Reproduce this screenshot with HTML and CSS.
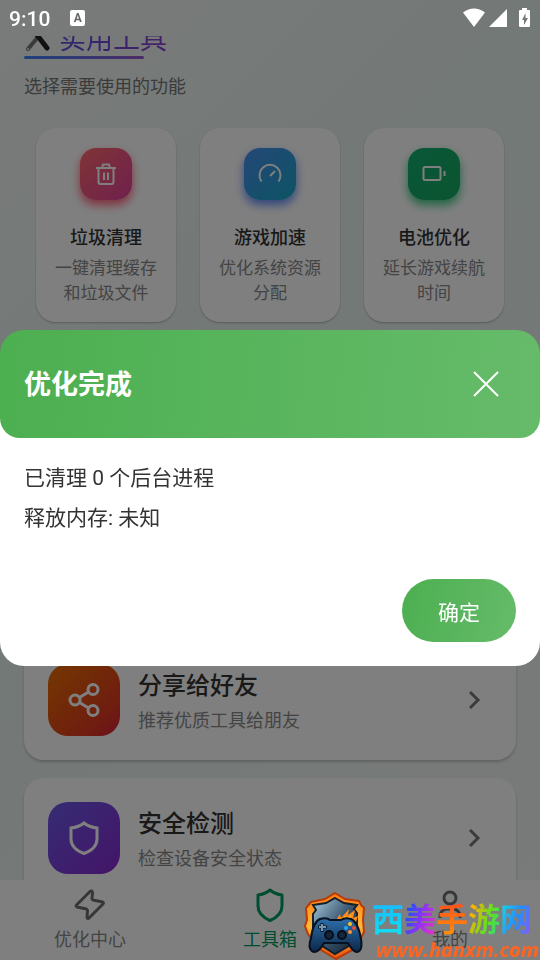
FILE: index.html
```html
<!DOCTYPE html>
<html lang="zh-CN">
<head>
    <meta charset="UTF-8">
    <meta name="viewport" content="width=device-width, initial-scale=1.0">
    <title>工具箱</title>
    <link rel="stylesheet" href="styles.css">
</head>
<body>

    <div class="app">
        <main class="content">
            <header class="page-header">
                <h1>
                    <svg class="title-icon" viewBox="0 0 27 27">
                        <path d="M4 23 L14 11" stroke="#777" stroke-width="4" stroke-linecap="round"/>
                        <path d="M13 9 L23 22" stroke="#222" stroke-width="5" stroke-linecap="round"/>
                        <circle cx="4" cy="23" r="1" fill="#eee" stroke="none"/>
                    </svg>
                    <span class="title-text">实用工具</span>
                </h1>
                <p>选择需要使用的功能</p>
            </header>

            <section class="tool-grid">
                <a href="#" class="tool-card">
                    <span class="tool-icon red">
                        <svg viewBox="0 0 24 24"><path d="M2 6h20M8 6l1-3.500h6L16 6M4.500 6v14a2 2 0 0 0 2 2h11a2 2 0 0 0 2-2V6M10 10.500v7.500M14 10.500v7.500"/></svg>
                    </span>
                    <strong>垃圾清理</strong>
                    <span class="desc">一键清理缓存和垃圾文件</span>
                </a>
                <a href="#" class="tool-card">
                    <span class="tool-icon blue">
                        <svg viewBox="0 0 24 24"><path d="M3.500 19.500a10.500 10.500 0 1 1 17 0M12 14l5-5"/></svg>
                    </span>
                    <strong>游戏加速</strong>
                    <span class="desc">优化系统资源分配</span>
                </a>
                <a href="#" class="tool-card">
                    <span class="tool-icon green">
                        <svg viewBox="0 0 24 24"><rect x="1.500" y="5" width="17" height="13" rx="1.500"/><path d="M22.500 9v5"/></svg>
                    </span>
                    <strong>电池优化</strong>
                    <span class="desc">延长游戏续航时间</span>
                </a>
            </section>

            <section class="feature-list">
                <a href="#" class="feature-card">
                    <span class="feature-icon orange">
                        <svg viewBox="0 0 36 36"><circle cx="9" cy="18" r="5"/><circle cx="27" cy="7.500" r="5"/><circle cx="27" cy="28.500" r="5"/><path d="M13.500 15.500l9-5.500M13.500 20.500l9 5.500"/></svg>
                    </span>
                    <span class="feature-text">
                        <strong>分享给好友</strong>
                        <span>推荐优质工具给朋友</span>
                    </span>
                    <svg class="chevron" viewBox="0 0 36 36"><path d="M14 10l8 8-8 8"/></svg>
                </a>
                <a href="#" class="feature-card">
                    <span class="feature-icon purple">
                        <svg viewBox="0 0 36 36"><path d="M18 3c3.500 3 8 4.500 13 5v11c0 7-5 11.500-13 14.500C10 30.500 5 26 5 19V8c5-.5 9.500-2 13-5z"/></svg>
                    </span>
                    <span class="feature-text">
                        <strong>安全检测</strong>
                        <span>检查设备安全状态</span>
                    </span>
                    <svg class="chevron" viewBox="0 0 36 36"><path d="M14 10l8 8-8 8"/></svg>
                </a>
            </section>
        </main>

        <nav class="tab-bar">
            <a href="#">
                <svg viewBox="0 0 36 36"><path d="M18 4.500L4.500 18q-1 1.500.500 2l9.500 2q1 .5 1 1.500l-.5 7q.5 2 2 .5L31 17q1-1.500-.5-2l-9.500-2q-1-.5-1-1.500l.5-6q-.5-2.500-2.500-1z"/></svg>
                <span>优化中心</span>
            </a>
            <a href="#" class="active">
                <svg viewBox="0 0 36 36"><path d="M18 3c3.500 3 8 4.500 12 5v11c0 7-5 11.500-12 14.500C11 30.500 6 26 6 19V8c4-.5 8.500-2 12-5z"/></svg>
                <span>工具箱</span>
            </a>
            <a href="#">
                <svg viewBox="0 0 36 36"><circle cx="18" cy="11" r="6"/><path d="M8 31v-2a7 7 0 0 1 7-7h6a7 7 0 0 1 7 7v2"/></svg>
                <span>我的</span>
            </a>
        </nav>
    </div>

    <div class="overlay">
        <div class="modal" role="dialog" aria-labelledby="modal-title">
            <div class="modal-header">
                <h2 id="modal-title">优化完成</h2>
                <button class="close-btn" aria-label="关闭">
                    <svg viewBox="0 0 36 36"><path d="M6 6l24 24M30 6L6 30"/></svg>
                </button>
            </div>
            <div class="modal-body">
                <p>已清理 0 个后台进程</p>
                <p>释放内存: 未知</p>
            </div>
            <div class="modal-footer">
                <button class="ok-btn">确定</button>
            </div>
        </div>
    </div>

    <div class="status-bar">
        <span class="time">9:10</span>
        <span class="badge">A</span>
        <svg class="status-icons" viewBox="0 0 68 20">
            <path d="M0 4.500Q11-3.500 22 4.500L11 19z"/>
            <path d="M44 1v18H26z"/>
            <path fill-rule="evenodd" d="M59 0h5v2h2q1 0 1 1v15q0 1-1 1h-9q-1 0-1-1V3q0-1 1-1h2zM62.500 5l-3.500 7h2v5l4-7h-2.500z"/>
        </svg>
    </div>

    <div class="watermark">
        <svg class="shield" viewBox="0 0 62 68">
            <defs>
                <linearGradient id="fire" x1="0" y1="0" x2="0" y2="1">
                    <stop offset="0" stop-color="#ff7a0c"/>
                    <stop offset=".5" stop-color="#ffb83c"/>
                    <stop offset="1" stop-color="#e8540c"/>
                </linearGradient>
                <linearGradient id="steel" x1="0" y1="0" x2="1" y2="1">
                    <stop offset="0" stop-color="#a9cbe0"/>
                    <stop offset=".5" stop-color="#3b5870"/>
                    <stop offset="1" stop-color="#0c1a2b"/>
                </linearGradient>
                <linearGradient id="pad" x1="0" y1="0" x2="0" y2="1">
                    <stop offset="0" stop-color="#2d70ac"/>
                    <stop offset="1" stop-color="#0c2748"/>
                </linearGradient>
            </defs>
            <path d="M31 1l10 6 14 2 2 4 3 3-1 12 1 12-8 16-20 11-18-11L4 42 1 34l2-6-1-12 5-6 14-3z" fill="url(#fire)" stroke="#b83b0a"/>
            <path d="M31 6l9 5 13 2-3 4 3 4v20l-5 11-17 10-16-10-6-12V22l3-4-3-5 13-2z" fill="url(#steel)" stroke="#17202c" stroke-width="2"/>
            <path d="M31 30l5-8 1 4 8-9-1 6 7-5-2 8 5-2-4 12-20 2z" fill="#ff8a14"/>
            <path d="M37 30l4-6 1 4 5-5-2 8-8 3z" fill="#ffd45a"/>
            <path d="M16 27q7-2 10 1h11q4-3 10-1 7 3 10 20 2 12-4 13-4 0-9-9H20q-5 9-10 9-7-2-3-14 2-16 9-19z" fill="url(#pad)" stroke="#07111f" stroke-width="2"/>
            <path d="M18 31v9M14 35h9" stroke="#0a1728" stroke-width="3"/>
            <path d="M18 32v7M15 35h7" stroke="#7895ad"/>
            <circle cx="25" cy="43" r="4" fill="#16263a" stroke="#070e18"/>
            <circle cx="38" cy="43" r="4" fill="#16263a" stroke="#070e18"/>
            <circle cx="46" cy="32" r="2" fill="#ffc21d"/>
            <circle cx="42" cy="36" r="2" fill="#26a6f0"/>
            <circle cx="50" cy="36" r="2" fill="#f04a30"/>
            <circle cx="46" cy="40" r="2" fill="#ff922a"/>
        </svg>
        <div class="watermark-text">
            <div class="site-name"><span class="c1">西</span><span class="c2">美</span><span class="c3">手</span><span class="c4">游</span><span class="c5">网</span></div>
            <div class="site-url">www.hanxm.com</div>
        </div>
    </div>

</body>
</html>
```

FILE: styles.css
```css
* {
    box-sizing: border-box;
}
body {
    font-family: Roboto, "Noto Sans CJK SC", sans-serif;
    margin: 0;
    height: 100vh;
    overflow: hidden;
    color: #333;
}
h1, h2, p {
    margin: 0;
}
a {
    color: inherit;
    text-decoration: none;
}
button {
    border: none;
    font-family: inherit;
    cursor: pointer;
}
svg {
    flex: none;
    fill: none;
    stroke: currentColor;
    stroke-width: 2;
}
.app {
    height: 100%;
    padding-top: 36px;
    display: flex;
    flex-direction: column;
    background: linear-gradient(135deg, #f2f6f4, #e6f2ee 40%, #f2f6f4);
}

/* content, scrolled a little under the status bar */
.content {
    flex: 1;
    min-height: 0;
    overflow: hidden;
    padding: 0 24px;
}
.page-header {
    margin-top: -16px;
}
.page-header h1 {
    display: flex;
    align-items: center;
    gap: 8px;
    height: 39px;
    font-size: 27px;
    line-height: 40px;
    position: relative;
}
.page-header h1::after {
    content: "";
    position: absolute;
    left: 0;
    bottom: 0;
    width: 120px;
    height: 3px;
    border-radius: 2px;
    background: linear-gradient(90deg, #3b82f6, #9b59d0);
}
.title-icon {
    width: 27px;
    height: 27px;
}
.title-text {
    font-weight: 400;
    background: linear-gradient(90deg, #5b50e0, #8b3fd0);
    -webkit-background-clip: text;
    background-clip: text;
    color: transparent;
}
.page-header p {
    margin-top: 15px;
    font-size: 18px;
    line-height: 26px;
    color: #777;
}

.tool-grid {
    display: grid;
    grid-template-columns: repeat(3, 1fr);
    gap: 24px;
    margin: 28px 12px 0;
}
.tool-card {
    display: flex;
    flex-direction: column;
    align-items: center;
    padding: 20px 16px 16px;
    background: #fff;
    border-radius: 20px;
    box-shadow: 0 1px 2px rgba(0, 0, 0, 0.25);
    text-align: center;
}
.tool-icon {
    display: flex;
    align-items: center;
    justify-content: center;
    width: 52px;
    height: 52px;
    border-radius: 16px;
    color: #fff;
}
.tool-icon svg {
    width: 24px;
    height: 24px;
}
.red {
    background: linear-gradient(135deg, #ff6b6b, #e0409a);
    box-shadow: 0 5px 10px rgba(255, 60, 90, 0.8);
}
.blue {
    background: linear-gradient(135deg, #4a8ff0, #18a8c8);
    box-shadow: 0 5px 10px rgba(59, 110, 246, 0.8);
}
.green {
    background: linear-gradient(135deg, #10b070, #18a860);
    box-shadow: 0 5px 10px rgba(16, 185, 100, 0.8);
}
.tool-card strong {
    margin-top: 25px;
    font-size: 18px;
    line-height: 26px;
    font-weight: 500;
}
.tool-card .desc {
    margin-top: 5px;
    font-size: 17px;
    line-height: 25px;
    color: #888;
}

.feature-list {
    display: flex;
    flex-direction: column;
    gap: 18px;
    margin-top: 318px;
}
.feature-card {
    display: flex;
    align-items: center;
    gap: 18px;
    padding: 24px;
    background: #fff;
    border-radius: 20px;
    box-shadow: 0 2px 3px rgba(0, 0, 0, 0.2);
}
.feature-icon {
    display: flex;
    align-items: center;
    justify-content: center;
    width: 72px;
    height: 72px;
    border-radius: 20px;
    color: #fff;
}
.feature-icon svg {
    width: 36px;
    height: 36px;
    stroke-width: 3;
}
.orange {
    background: linear-gradient(135deg, #e87000, #e03a20 75%, #d82040);
}
.purple {
    background: linear-gradient(135deg, #6a5ae8, #8a28d0);
}
.feature-text {
    flex: 1;
    display: flex;
    flex-direction: column;
    padding-top: 2px;
    font-size: 18px;
    line-height: 26px;
    color: #888;
}
.feature-text strong {
    font-size: 24px;
    line-height: 36px;
    font-weight: 500;
    color: #333;
    margin-bottom: 4px;
}
.chevron {
    width: 36px;
    height: 36px;
    stroke-width: 3;
    color: #777;
}

.tab-bar {
    display: grid;
    grid-template-columns: repeat(3, 1fr);
    background: #fff;
    padding: 7px 0;
    font-size: 18px;
    line-height: 26px;
    color: #888;
}
.tab-bar a {
    display: flex;
    flex-direction: column;
    align-items: center;
    gap: 4px;
}
.tab-bar svg {
    width: 36px;
    height: 36px;
    stroke-width: 3;
    stroke-linejoin: round;
    color: #6b6e72;
}
.tab-bar .active,
.tab-bar .active svg {
    color: #009a60;
}

/* dialog */
.overlay {
    position: fixed;
    inset: 0;
    padding-top: 36px;
    display: flex;
    align-items: center;
    background: rgba(0, 0, 0, 0.5);
}
.modal {
    width: 100%;
    background: linear-gradient(transparent 48px, #fff 48px);
    border-radius: 24px;
}
.modal-header {
    display: flex;
    align-items: center;
    justify-content: space-between;
    padding: 24px;
    border-radius: 24px 24px 20px 20px;
    background: linear-gradient(95deg, #4caf50, #66bb6a);
    color: #fff;
}
.modal-header h2 {
    padding-top: 2px;
    font-size: 27px;
    line-height: 40px;
    font-weight: 700;
}
.close-btn {
    display: flex;
    align-items: center;
    justify-content: center;
    width: 60px;
    height: 60px;
    padding: 0;
    background: none;
    color: #fff;
}
.close-btn svg {
    width: 36px;
    height: 36px;
}
.modal-body {
    padding: 20px 24px 41px;
    font-size: 21px;
    line-height: 40px;
}
.modal-footer {
    display: flex;
    justify-content: flex-end;
    padding: 0 24px 24px;
}
.ok-btn {
    width: 114px;
    height: 63px;
    border-radius: 32px;
    background: linear-gradient(105deg, #4caf50, #66bb6a);
    color: #fff;
    font-size: 21px;
}

.status-bar {
    position: fixed;
    top: 0;
    left: 0;
    right: 0;
    height: 36px;
    display: flex;
    align-items: center;
    padding: 0 9px;
    color: #fff;
}
.time {
    font-size: 21px;
    line-height: 24px;
    padding-top: 2px;
    font-weight: 500;
}
.badge {
    width: 15px;
    height: 16px;
    margin-left: 20px;
    border-radius: 2px;
    background: #fff;
    color: #666;
    font-size: 12px;
    font-weight: 700;
    line-height: 16px;
    text-align: center;
}
.status-icons {
    width: 68px;
    height: 20px;
    margin-left: auto;
    fill: #fff;
    stroke: none;
}

/* site mark over the tab bar */
.watermark {
    position: fixed;
    right: 0;
    bottom: 0;
    display: flex;
    align-items: flex-start;
    gap: 6px;
    width: 236px;
    height: 68px;
}
.shield {
    width: 62px;
    height: 68px;
    stroke: none;
}
.watermark-text {
    padding-top: 8px;
}
.site-name {
    display: flex;
    font-size: 32px;
    line-height: 40px;
    font-weight: 700;
}
.site-name span {
    -webkit-background-clip: text;
    background-clip: text;
    color: transparent;
}
.c1 { background-image: linear-gradient(#19b8ff, #10e4ee); }
.c2 { background-image: linear-gradient(110deg, #2a4cff 20%, #9c30f0 55%, #ff30c0); }
.c3 { background-image: linear-gradient(#ff4a20, #ff9a00); }
.c4 { background-image: linear-gradient(110deg, #ffb000 15%, #60e020 60%, #20d8a0); }
.c5 { background-image: linear-gradient(110deg, #18e0e0, #2090ff 50%, #9a50f8); }
.site-url {
    padding-left: 4px;
    font-family: "Open Sans", sans-serif;
    font-size: 20px;
    line-height: 20px;
    font-weight: 700;
    font-style: italic;
    color: #ff6420;
}
```
